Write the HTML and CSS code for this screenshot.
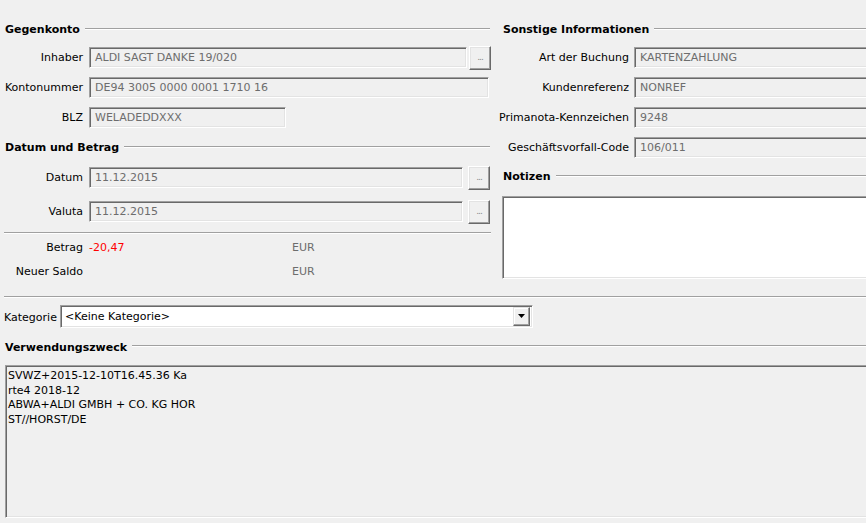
FILE: index.html
```html
<!DOCTYPE html>
<html lang="de">
<head>
<meta charset="utf-8">
<title>Buchung</title>
<link rel="stylesheet" href="styles.css">
</head>
<body>
<div class="top">
  <div class="left">
    <div class="heading"><span>Gegenkonto</span></div>
    <div class="form form-konto">
      <label>Inhaber</label>
      <div class="with-btn">
        <div class="field w-inhaber">ALDI SAGT DANKE 19/020</div>
        <div class="btn">...</div>
      </div>
      <label>Kontonummer</label>
      <div class="field w-konto">DE94 3005 0000 0001 1710 16</div>
      <label>BLZ</label>
      <div class="field w-blz">WELADEDDXXX</div>
    </div>
    <div class="heading h-datum"><span>Datum und Betrag</span></div>
    <div class="form form-datum">
      <label>Datum</label>
      <div class="with-btn gap5">
        <div class="field w-datum">11.12.2015</div>
        <div class="btn">...</div>
      </div>
      <label>Valuta</label>
      <div class="with-btn gap5">
        <div class="field w-datum">11.12.2015</div>
        <div class="btn">...</div>
      </div>
    </div>
    <div class="sep sep-left"></div>
    <div class="amounts">
      <label>Betrag</label><span class="neg">-20,47</span><span class="cur">EUR</span>
      <label>Neuer Saldo</label><span></span><span class="cur">EUR</span>
    </div>
  </div>
  <div class="right">
    <div class="heading"><span>Sonstige Informationen</span></div>
    <div class="form form-info">
      <label>Art der Buchung</label>
      <div class="field open w-info">KARTENZAHLUNG</div>
      <label>Kundenreferenz</label>
      <div class="field open w-info">NONREF</div>
      <label>Primanota-Kennzeichen</label>
      <div class="field open w-info">9248</div>
      <label>Geschäftsvorfall-Code</label>
      <div class="field open w-info">106/011</div>
    </div>
    <div class="heading h-notizen"><span>Notizen</span></div>
    <div class="notes"></div>
  </div>
</div>
<div class="sep sep-full"></div>
<div class="kategorie">
  <label>Kategorie</label>
  <div class="combo">
    <span class="combo-text">&lt;Keine Kategorie&gt;</span>
    <span class="combo-btn"><svg width="7" height="4" viewBox="0 0 7 4"><path d="M0 0H7L3.5 4Z" fill="#000"/></svg></span>
  </div>
</div>
<div class="heading h-zweck"><span>Verwendungszweck</span></div>
<div class="zweck">SVWZ+2015-12-10T16.45.36 Ka
rte4 2018-12
ABWA+ALDI GMBH + CO. KG HOR
ST//HORST/DE</div>
</body>
</html>
```
FILE: styles.css
```css
html, body {
  margin: 0;
  padding: 0;
}
body {
  width: 866px;
  height: 523px;
  overflow: hidden;
  background: #f0f0f0;
  font-family: "DejaVu Sans", "Liberation Sans", sans-serif;
  font-size: 11px;
  color: #000;
}
label {
  white-space: nowrap;
}
.top {
  display: flex;
  height: 296px;
  box-sizing: border-box;
  padding-top: 22px;
}
.left {
  width: 491px;
  flex: none;
}
.right {
  margin-left: 7px;
  width: 368px;
  flex: none;
}
.heading {
  display: flex;
  height: 16px;
  line-height: 16px;
  padding-left: 5px;
  font-weight: bold;
}
.heading::after {
  content: "";
  flex: 1;
  height: 0;
  margin-top: 6px;
  margin-left: 5px;
  border-top: 1px solid #a0a0a0;
  border-bottom: 1px solid #ffffff;
}
.left .heading::after {
  margin-right: 1px;
}
.form {
  display: grid;
  grid-template-columns: 83px auto;
  column-gap: 6px;
  grid-auto-rows: 21px;
  align-items: center;
}
.form label {
  text-align: right;
}
.form-konto {
  margin-top: 9px;
  row-gap: 9px;
}
.h-datum {
  margin-top: 12px;
}
.form-datum {
  margin-top: 11px;
  row-gap: 13px;
}
.form-info {
  margin-top: 9px;
  row-gap: 9px;
  grid-template-columns: 131px auto;
  column-gap: 5px;
}
.field {
  height: 21px;
  box-sizing: border-box;
  border: 1px solid;
  border-color: #a0a0a0 #ffffff #ffffff #a0a0a0;
  box-shadow: inset 1px 1px 0 #696969, inset -1px -1px 0 #e3e3e3;
  padding-left: 5px;
  line-height: 19px;
  color: #6d6d6d;
  white-space: nowrap;
  overflow: hidden;
}
.field.open {
  border-right: none;
  box-shadow: inset 1px 1px 0 #696969, inset 0 -1px 0 #e3e3e3;
}
.w-inhaber { width: 378px; }
.w-konto { width: 400px; }
.w-blz { width: 197px; }
.w-datum { width: 374px; }
.w-info { width: 232px; }
.with-btn {
  display: flex;
  align-items: center;
  gap: 2px;
  height: 21px;
}
.with-btn.gap5 {
  gap: 5px;
}
.btn {
  width: 22px;
  height: 24px;
  flex: none;
  box-sizing: border-box;
  border: 1px solid;
  border-color: #ffffff #696969 #696969 #ffffff;
  box-shadow: inset -1px -1px 0 #a0a0a0, inset 1px 1px 0 #e3e3e3;
  color: #8a8a8a;
  font-size: 9px;
  text-align: center;
  line-height: 20px;
  letter-spacing: -1px;
}
.sep {
  height: 0;
  border-top: 1px solid #a0a0a0;
  border-bottom: 1px solid #ffffff;
}
.sep-left {
  margin-top: 10px;
  margin-left: 4px;
}
.amounts {
  margin-top: 6px;
  display: grid;
  grid-template-columns: 83px 197px auto;
  column-gap: 6px;
  grid-auto-rows: 16px;
  row-gap: 8px;
  line-height: 16px;
}
.amounts label {
  text-align: right;
}
.neg {
  color: #ff0000;
}
.cur {
  color: #6d6d6d;
}
.h-notizen {
  margin-top: 11px;
}
.notes {
  margin-top: 11px;
  margin-left: 4px;
  height: 83px;
  box-sizing: border-box;
  background: #ffffff;
  border: 1px solid;
  border-right: none;
  border-color: #a0a0a0 #ffffff #ffffff #a0a0a0;
  box-shadow: inset 1px 1px 0 #696969, inset 0 -1px 0 #e3e3e3;
}
.sep-full {
  margin-left: 4px;
}
.kategorie {
  display: flex;
  align-items: center;
  margin-top: 7px;
  padding-left: 4px;
  height: 23px;
}
.kategorie label {
  width: 56px;
  padding-top: 1px;
}
.combo {
  width: 473px;
  height: 23px;
  box-sizing: border-box;
  background: #ffffff;
  border: 1px solid;
  border-color: #a0a0a0 #ffffff #ffffff #a0a0a0;
  box-shadow: inset 1px 1px 0 #696969, inset -1px -1px 0 #e3e3e3;
  display: flex;
  align-items: center;
  padding: 1px 2px 2px 4px;
}
.combo-text {
  flex: 1;
  line-height: 19px;
}
.combo-btn {
  width: 17px;
  height: 19px;
  box-sizing: border-box;
  background: #f0f0f0;
  border: 1px solid;
  border-color: #e3e3e3 #696969 #696969 #e3e3e3;
  box-shadow: inset -1px -1px 0 #a0a0a0, inset 1px 1px 0 #ffffff;
  display: flex;
  align-items: center;
  justify-content: center;
}
.h-zweck {
  margin-top: 12px;
}
.h-zweck::after {
  margin-top: 5px;
}
.zweck {
  margin-top: 9px;
  margin-left: 5px;
  width: 861px;
  height: 153px;
  box-sizing: border-box;
  border: 1px solid;
  border-right: none;
  border-color: #a0a0a0 #ffffff #ffffff #a0a0a0;
  box-shadow: inset 1px 1px 0 #696969, inset 0 -1px 0 #e3e3e3;
  padding: 3px 3px 3px 2px;
  line-height: 14.5px;
  white-space: pre-line;
}
```
